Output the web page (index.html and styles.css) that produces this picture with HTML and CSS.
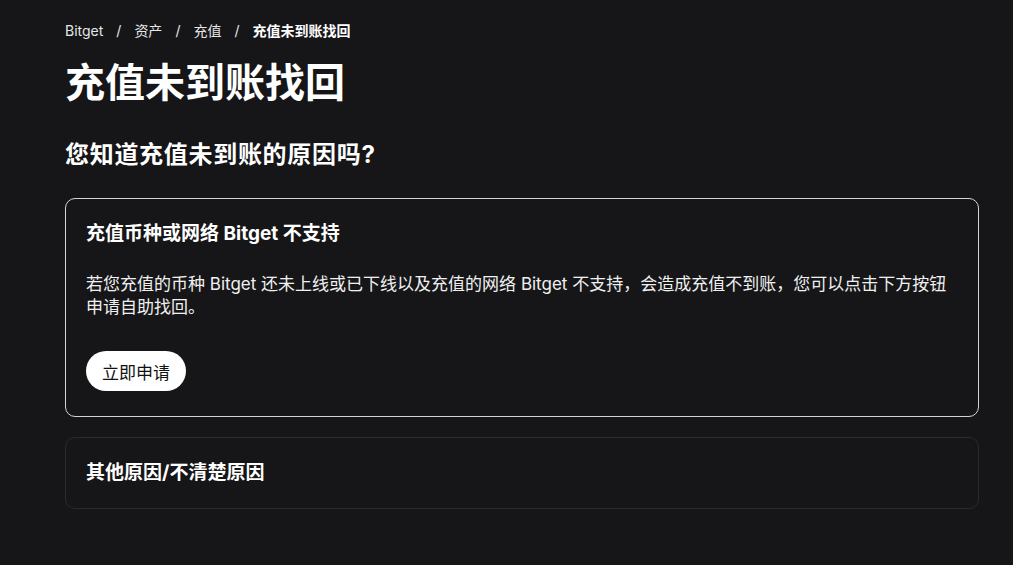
FILE: index.html
```html
<!DOCTYPE html>
<html lang="zh-CN">

<head>
  <meta charset="UTF-8">
  <meta name="viewport" content="width=device-width, initial-scale=1.0">
  <title>充值未到账找回</title>
  <link rel="stylesheet" href="styles.css">
</head>

<body>

  <div class="page">
    <nav class="crumbs">
      <a href="#">Bitget</a>
      <span class="sep">/</span>
      <a href="#">资产</a>
      <span class="sep">/</span>
      <a href="#">充值</a>
      <span class="sep">/</span>
      <span class="current">充值未到账找回</span>
    </nav>

    <h1>充值未到账找回</h1>
    <h2>您知道充值未到账的原因吗?</h2>

    <div class="card active">
      <h3>充值币种或网络 Bitget 不支持</h3>
      <p>若您充值的币种 Bitget 还未上线或已下线以及充值的网络 Bitget 不支持，会造成充值不到账，您可以点击下方按钮申请自助找回。</p>
      <button class="btn">立即申请</button>
    </div>

    <div class="card">
      <h3>其他原因/不清楚原因</h3>
    </div>
  </div>

</body>

</html>
```

FILE: styles.css
```css
body {
  margin: 0;
  background-color: #161618;
  color: #fff;
  font-family: Inter, "Noto Sans CJK SC", sans-serif;
}

.page {
  width: 914px;
  padding: 20px 0 40px 65px;
}

.crumbs {
  display: flex;
  align-items: center;
  gap: 13px;
  font-size: 14px;
  line-height: 22px;
}

.crumbs a {
  color: #e6e6e6;
  text-decoration: none;
}

.crumbs .sep {
  color: #e6e6e6;
}

.crumbs .current {
  font-weight: 700;
}

h1 {
  margin: 15px 0 0;
  font-size: 40px;
  line-height: 52px;
  font-weight: 700;
}

h2 {
  margin: 30px 0 0;
  font-size: 24px;
  line-height: 32px;
  font-weight: 700;
  letter-spacing: 0.7px;
}

.card {
  margin-top: 20px;
  padding: 20px;
  border: 1px solid #2a2a2d;
  border-radius: 10px;
}

.card.active {
  margin-top: 27px;
  padding-bottom: 25px;
  border-color: #d4d4d4;
}

h3 {
  margin: 0;
  font-size: 19px;
  line-height: 30px;
  font-weight: 700;
}

.card p {
  margin: 24px 0 0;
  font-size: 17px;
  line-height: 23px;
  color: #f0f0f0;
}

.btn {
  margin-top: 32px;
  height: 40px;
  padding: 0 16px;
  border: none;
  border-radius: 20px;
  background-color: #fff;
  color: #111;
  font-family: inherit;
  font-size: 17px;
  cursor: pointer;
}
```
